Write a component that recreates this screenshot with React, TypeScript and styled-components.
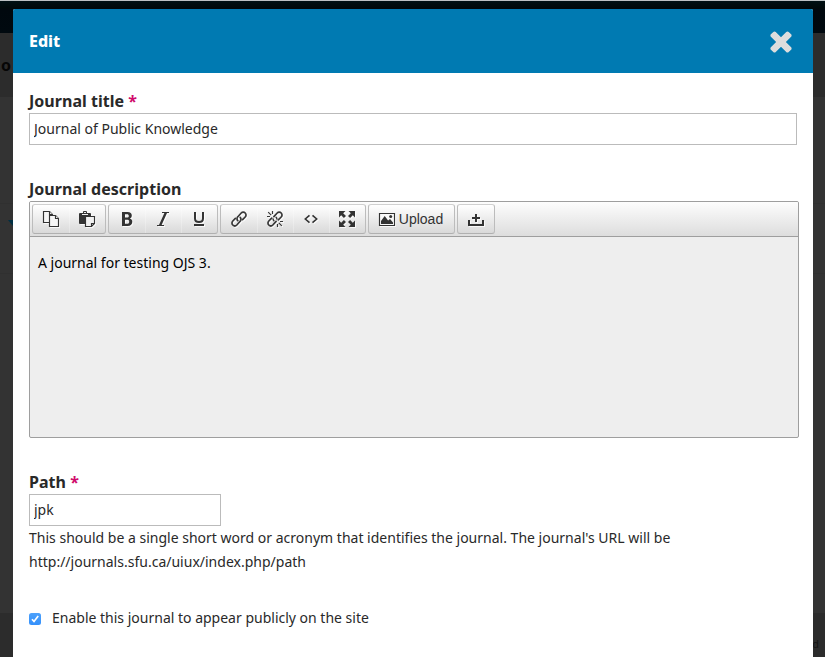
import React from 'react';
import styled, { createGlobalStyle } from 'styled-components';

const GlobalStyle = createGlobalStyle`
  *, *::before, *::after { box-sizing: border-box; }
  html, body { margin: 0; padding: 0; height: 657px; overflow: hidden; }
  body {
    background: #333;
    color: #292929;
    font-family: 'Noto Sans', 'Open Sans', sans-serif;
    font-size: 14px;
    line-height: 24px;
  }
`;

const Page = styled.div`
  position: relative;
  display: flex;
  flex-direction: column;
  width: 825px;
  height: 657px;
  overflow: hidden;
`;

const TopBar = styled.div`
  height: 33px;
  border-top: 1px solid #bcc1c3;
  background: linear-gradient(#001014 0, #00090a 7px, #00080e 8px, #00090f 100%);
`;

const TitleBar = styled.div`
  height: 64px;
  background: #2c2c2c;
  color: #060606;
  font-size: 16px;
  font-weight: 700;
  line-height: 64px;
  padding-left: 1px;
`;

const Backdrop = styled.div`
  flex: 1;
  padding-top: 106px;
  background: #333;
`;

const BackdropPanel = styled.div`
  height: 71px;
  border: solid #303030;
  border-width: 1px 0;
  padding: 16px 0 0 8px;
`;

const Caret = styled.svg`
  display: block;
  width: 10px;
  height: 6px;
`;

const Footer = styled.div`
  display: flex;
  justify-content: flex-end;
  height: 44px;
  padding: 19px 6px 0 0;
  background: #2c2c2c;
  color: #141414;
  font-size: 11px;
`;

const Modal = styled.section`
  position: absolute;
  top: 9px;
  left: 13px;
  width: 800px;
  height: 648px;
  border-radius: 2px 2px 0 0;
  background: #fff;
  overflow: hidden;
`;

const ModalHeader = styled.header`
  display: flex;
  align-items: center;
  justify-content: space-between;
  height: 64px;
  padding: 0 16px;
  background: #007ab2;
`;

const ModalTitle = styled.h1`
  margin: 0;
  color: #fff;
  font-size: 16px;
  font-weight: 800;
  line-height: 24px;
`;

const CloseButton = styled.button`
  display: flex;
  padding: 1px 0 0;
  border: 0;
  background: none;
  color: #ddd;
`;

const Form = styled.form`
  display: flex;
  flex-direction: column;
  padding: 16px 16px 0;
`;

const Field = styled.div<{ $gap: number }>`
  display: flex;
  flex-direction: column;
  margin-bottom: ${(p) => p.$gap}px;
`;

const Label = styled.label`
  font-size: 16px;
  font-weight: 700;
  line-height: 24px;
  letter-spacing: 0.03px;
`;

const Required = styled.span`
  color: #d00a6c;
`;

const TextInput = styled.input<{ $width: number }>`
  width: ${(p) => p.$width}px;
  height: 32px;
  padding: 0 4px 2px;
  border: 1px solid #bbb;
  border-radius: 0;
  outline: 0;
  background: #fff;
  color: #292929;
  font: 14px/28px 'Noto Sans', sans-serif;
`;

const Editor = styled.div`
  width: 770px;
  height: 237px;
  border: 1px solid #9e9e9e;
  border-radius: 2px;
  background: #eee;
  overflow: hidden;
`;

const Toolbar = styled.div`
  display: flex;
  gap: 2px;
  height: 35px;
  padding: 2px;
  border-bottom: 1px solid #9e9e9e;
  background: linear-gradient(#fdfdfd, #ddd);
`;

const ButtonGroup = styled.div`
  display: flex;
  height: 30px;
  border: 1px solid;
  border-color: #d0d0d0 #bcbcbc #b0b0b0 #bcbcbc;
  border-radius: 3px;
  background: linear-gradient(#fff, #d9d9d9);
  overflow: hidden;
`;

const ToolButton = styled.button<{ $width?: number }>`
  display: flex;
  align-items: center;
  justify-content: center;
  gap: 4px;
  width: ${(p) => p.$width ?? 36}px;
  padding: 0 1px 0 0;
  border: 0;
  background: none;
  color: #333;
  font: 14px 'Liberation Sans', Arial, sans-serif;

  & + & {
    box-shadow: inset 1px 0 rgba(255, 255, 255, 0.25);
  }
`;

const ToolIcon = styled.svg`
  display: block;
  flex: none;
  width: 16px;
  height: 16px;
  overflow: visible;
  filter: drop-shadow(1px 1px 0 rgba(255, 255, 255, 0.8));
`;

const EditorBody = styled.div`
  padding: 14px 8px;
  color: #000;
`;

const Help = styled.p`
  margin: 0;
  letter-spacing: 0.005px;
`;

const CheckRow = styled.label`
  display: flex;
  align-items: center;
  gap: 11px;
`;

const CheckBox = styled.span`
  display: flex;
  width: 12px;
  height: 12px;
  margin-top: 2px;
  border-radius: 2.5px;
  background: linear-gradient(#4ca1fb, #3490fb);
`;

const CopyIcon = () => (
  <ToolIcon viewBox="0 0 16 16" fill="#f6f6f6" stroke="#333" strokeWidth="1.15">
    <path d="M.5.5h6l3 3v8h-9z" />
    <path d="M6.500.5v3h3" />
    <path d="M6.500 4.500h6l3 3v8h-9z" />
    <path d="M12.500 4.500v3h3" />
  </ToolIcon>
);

const PasteIcon = () => (
  <ToolIcon viewBox="0 0 16 16">
    <path fill="#333" d="M1 2h3V1q0-1 1-1h2q1 0 1 1v1h3q1 0 1 1v3H7v7H1q-1 0-1-1V3q0-1 1-1z" />
    <path fill="#eee" d="M3 3h6v1H3zM5 1h2v1H5z" />
    <path fill="#f0f0f0" stroke="#333" strokeWidth="1.150" d="M6.500 5.500h9v7l-3 3h-6z" />
    <path fill="none" stroke="#333" strokeWidth="1.150" d="M15.500 12.500h-3v3" />
  </ToolIcon>
);

const BoldIcon = () => (
  <ToolIcon viewBox="0 0 16 16">
    <path
      fill="#333"
      fillRule="evenodd"
      d="M3 1h5.500c2.900 0 4.300 1.300 4.300 3.500 0 1.500-.7 2.500-2 3 1.700.4 2.500 1.600 2.500 3.300 0 2.700-1.700 4.200-4.600 4.200H3zM6 3.200v3.400h2c1.200 0 1.800-.6 1.800-1.700S9.200 3.200 8 3.200zm0 5.500v4.100h2.200c1.300 0 2-.7 2-2.100s-.7-2-2-2z"
    />
  </ToolIcon>
);

const ItalicIcon = () => (
  <ToolIcon viewBox="0 0 16 16">
    <path fill="#333" d="M7 1h7v1h-2L6.600 14H9v1H2v-1h2L9.400 2H7z" />
  </ToolIcon>
);

const UnderlineIcon = () => (
  <ToolIcon viewBox="0 0 16 16">
    <path fill="none" stroke="#333" strokeWidth="2" d="M4 1v6.500q0 3.500 4 3.500t4-3.500V1" />
    <path fill="#333" d="M3 13h10v2H3z" />
  </ToolIcon>
);

const LinkIcon = () => (
  <ToolIcon viewBox="0 0 16 16" fill="none" stroke="#383838" strokeWidth="1.700" strokeLinecap="round">
    <path d="M6.800 9.700a2.800 2.800 0 0 1 .1-4L10.200 2a2.800 2.800 0 0 1 4 4l-2.600 2.600" />
    <path d="M9.200 6.300a2.800 2.800 0 0 1-.1 4L5.800 14a2.800 2.800 0 0 1-4-4l2.600-2.600" />
  </ToolIcon>
);

const UnlinkIcon = () => (
  <ToolIcon viewBox="0 0 16 16" fill="none" stroke="#383838" strokeLinecap="round">
    <path strokeWidth="1.700" d="M6.900 5.600L10.200 2a2.800 2.800 0 0 1 4 4l-2.900 2.900M9.100 10.400L5.800 14a2.800 2.800 0 0 1-4-4l2.900-2.900" />
    <path strokeWidth="1.500" d="M6.100 8q.1 1 .8 1.700M9.900 8q-.1-1-.8-1.700" />
    <path strokeLinecap="butt" strokeWidth="1.200" d="M1.200 1.200l3 3M5.500 0v3M0 5.500h3M14.800 14.800l-3-3M10.500 13v3M13 10.500h3" />
  </ToolIcon>
);

const CodeIcon = () => (
  <ToolIcon viewBox="0 0 16 16" fill="none" stroke="#333" strokeWidth="1.600">
    <path d="M6.500 4.300L2.300 8l4.200 3.700M9.500 4.300L13.700 8l-4.200 3.700" />
  </ToolIcon>
);

const FullscreenIcon = () => (
  <ToolIcon viewBox="0 0 16 16">
    {[0, 90, 180, 270].map((angle) => (
      <path key={angle} fill="#333" transform={`rotate(${angle} 8 8)`} d="M0 0h6.500L4.200 2.200 7 4.900 4.900 7 2.200 4.200 0 6.500z" />
    ))}
  </ToolIcon>
);

const ImageIcon = () => (
  <ToolIcon viewBox="0 0 16 16">
    <path fill="#f8f8f8" stroke="#333" strokeWidth="1.150" d="M.5 2.500h15v12H.5z" />
    <path fill="#333" d="M2 13V10l3.700-5 3.400 4.500L11 8l3 3.500V13z" />
    <circle cx="11.700" cy="5.500" r="1.500" fill="#333" />
  </ToolIcon>
);

const UploadIcon = () => (
  <ToolIcon viewBox="0 0 16 16" fill="#333">
    <path d="M7 3h2v3h3v2H9v3H7V8H4V6h3zM0 9h2v4h12V9h2v6H0z" />
  </ToolIcon>
);

const CloseIcon = () => (
  <svg width="32" height="32" viewBox="0 64 1792 1792" fill="currentColor">
    <path d="M1490 1322q0 40-28 68l-136 136q-28 28-68 28t-68-28l-294-294-294 294q-28 28-68 28t-68-28l-136-136q-28-28-28-68t28-68l294-294-294-294q-28-28-28-68t28-68l136-136q28-28 68-28t68 28l294 294 294-294q28-28 68-28t68 28l136 136q28 28 28 68t-28 68l-294 294 294 294q28 28 28 68z" />
  </svg>
);

const toolGroups = [
  [CopyIcon, PasteIcon],
  [BoldIcon, ItalicIcon, UnderlineIcon],
  [LinkIcon, UnlinkIcon, CodeIcon, FullscreenIcon],
];

export default function App() {
  return (
    <>
      <GlobalStyle />
      <Page>
        <TopBar />
        <TitleBar>o</TitleBar>
        <Backdrop>
          <BackdropPanel>
            <Caret viewBox="0 0 10 6">
              <path d="M0 0h10L5 6z" fill="#002f43" />
            </Caret>
          </BackdropPanel>
        </Backdrop>
        <Footer>d</Footer>

        <Modal role="dialog">
          <ModalHeader>
            <ModalTitle>Edit</ModalTitle>
            <CloseButton type="button" aria-label="Close">
              <CloseIcon />
            </CloseButton>
          </ModalHeader>
          <Form>
            <Field $gap={32}>
              <Label>
                Journal title <Required>*</Required>
              </Label>
              <TextInput $width={768} defaultValue="Journal of Public Knowledge" />
            </Field>
            <Field $gap={32}>
              <Label>Journal description</Label>
              <Editor>
                <Toolbar>
                  {toolGroups.map((icons, index) => (
                    <ButtonGroup key={index}>
                      {icons.map((Icon, n) => (
                        <ToolButton type="button" key={n}>
                          <Icon />
                        </ToolButton>
                      ))}
                    </ButtonGroup>
                  ))}
                  <ButtonGroup>
                    <ToolButton type="button" $width={85}>
                      <ImageIcon />
                      Upload
                    </ToolButton>
                  </ButtonGroup>
                  <ButtonGroup>
                    <ToolButton type="button">
                      <UploadIcon />
                    </ToolButton>
                  </ButtonGroup>
                </Toolbar>
                <EditorBody>A journal for testing OJS 3.</EditorBody>
              </Editor>
            </Field>
            <Field $gap={32}>
              <Label>
                Path <Required>*</Required>
              </Label>
              <TextInput $width={192} defaultValue="jpk" />
              <Help>
                This should be a single short word or acronym that identifies the journal. The journal's URL will be
                <br />
                http://journals.sfu.ca/uiux/index.php/path
              </Help>
            </Field>
            <CheckRow>
              <CheckBox>
                <svg width="12" height="12" viewBox="0 0 12 12" fill="none" stroke="#fff" strokeWidth="1.700">
                  <path d="M3 6.300l2 2.200L9.200 3" />
                </svg>
              </CheckBox>
              Enable this journal to appear publicly on the site
            </CheckRow>
          </Form>
        </Modal>
      </Page>
    </>
  );
}
